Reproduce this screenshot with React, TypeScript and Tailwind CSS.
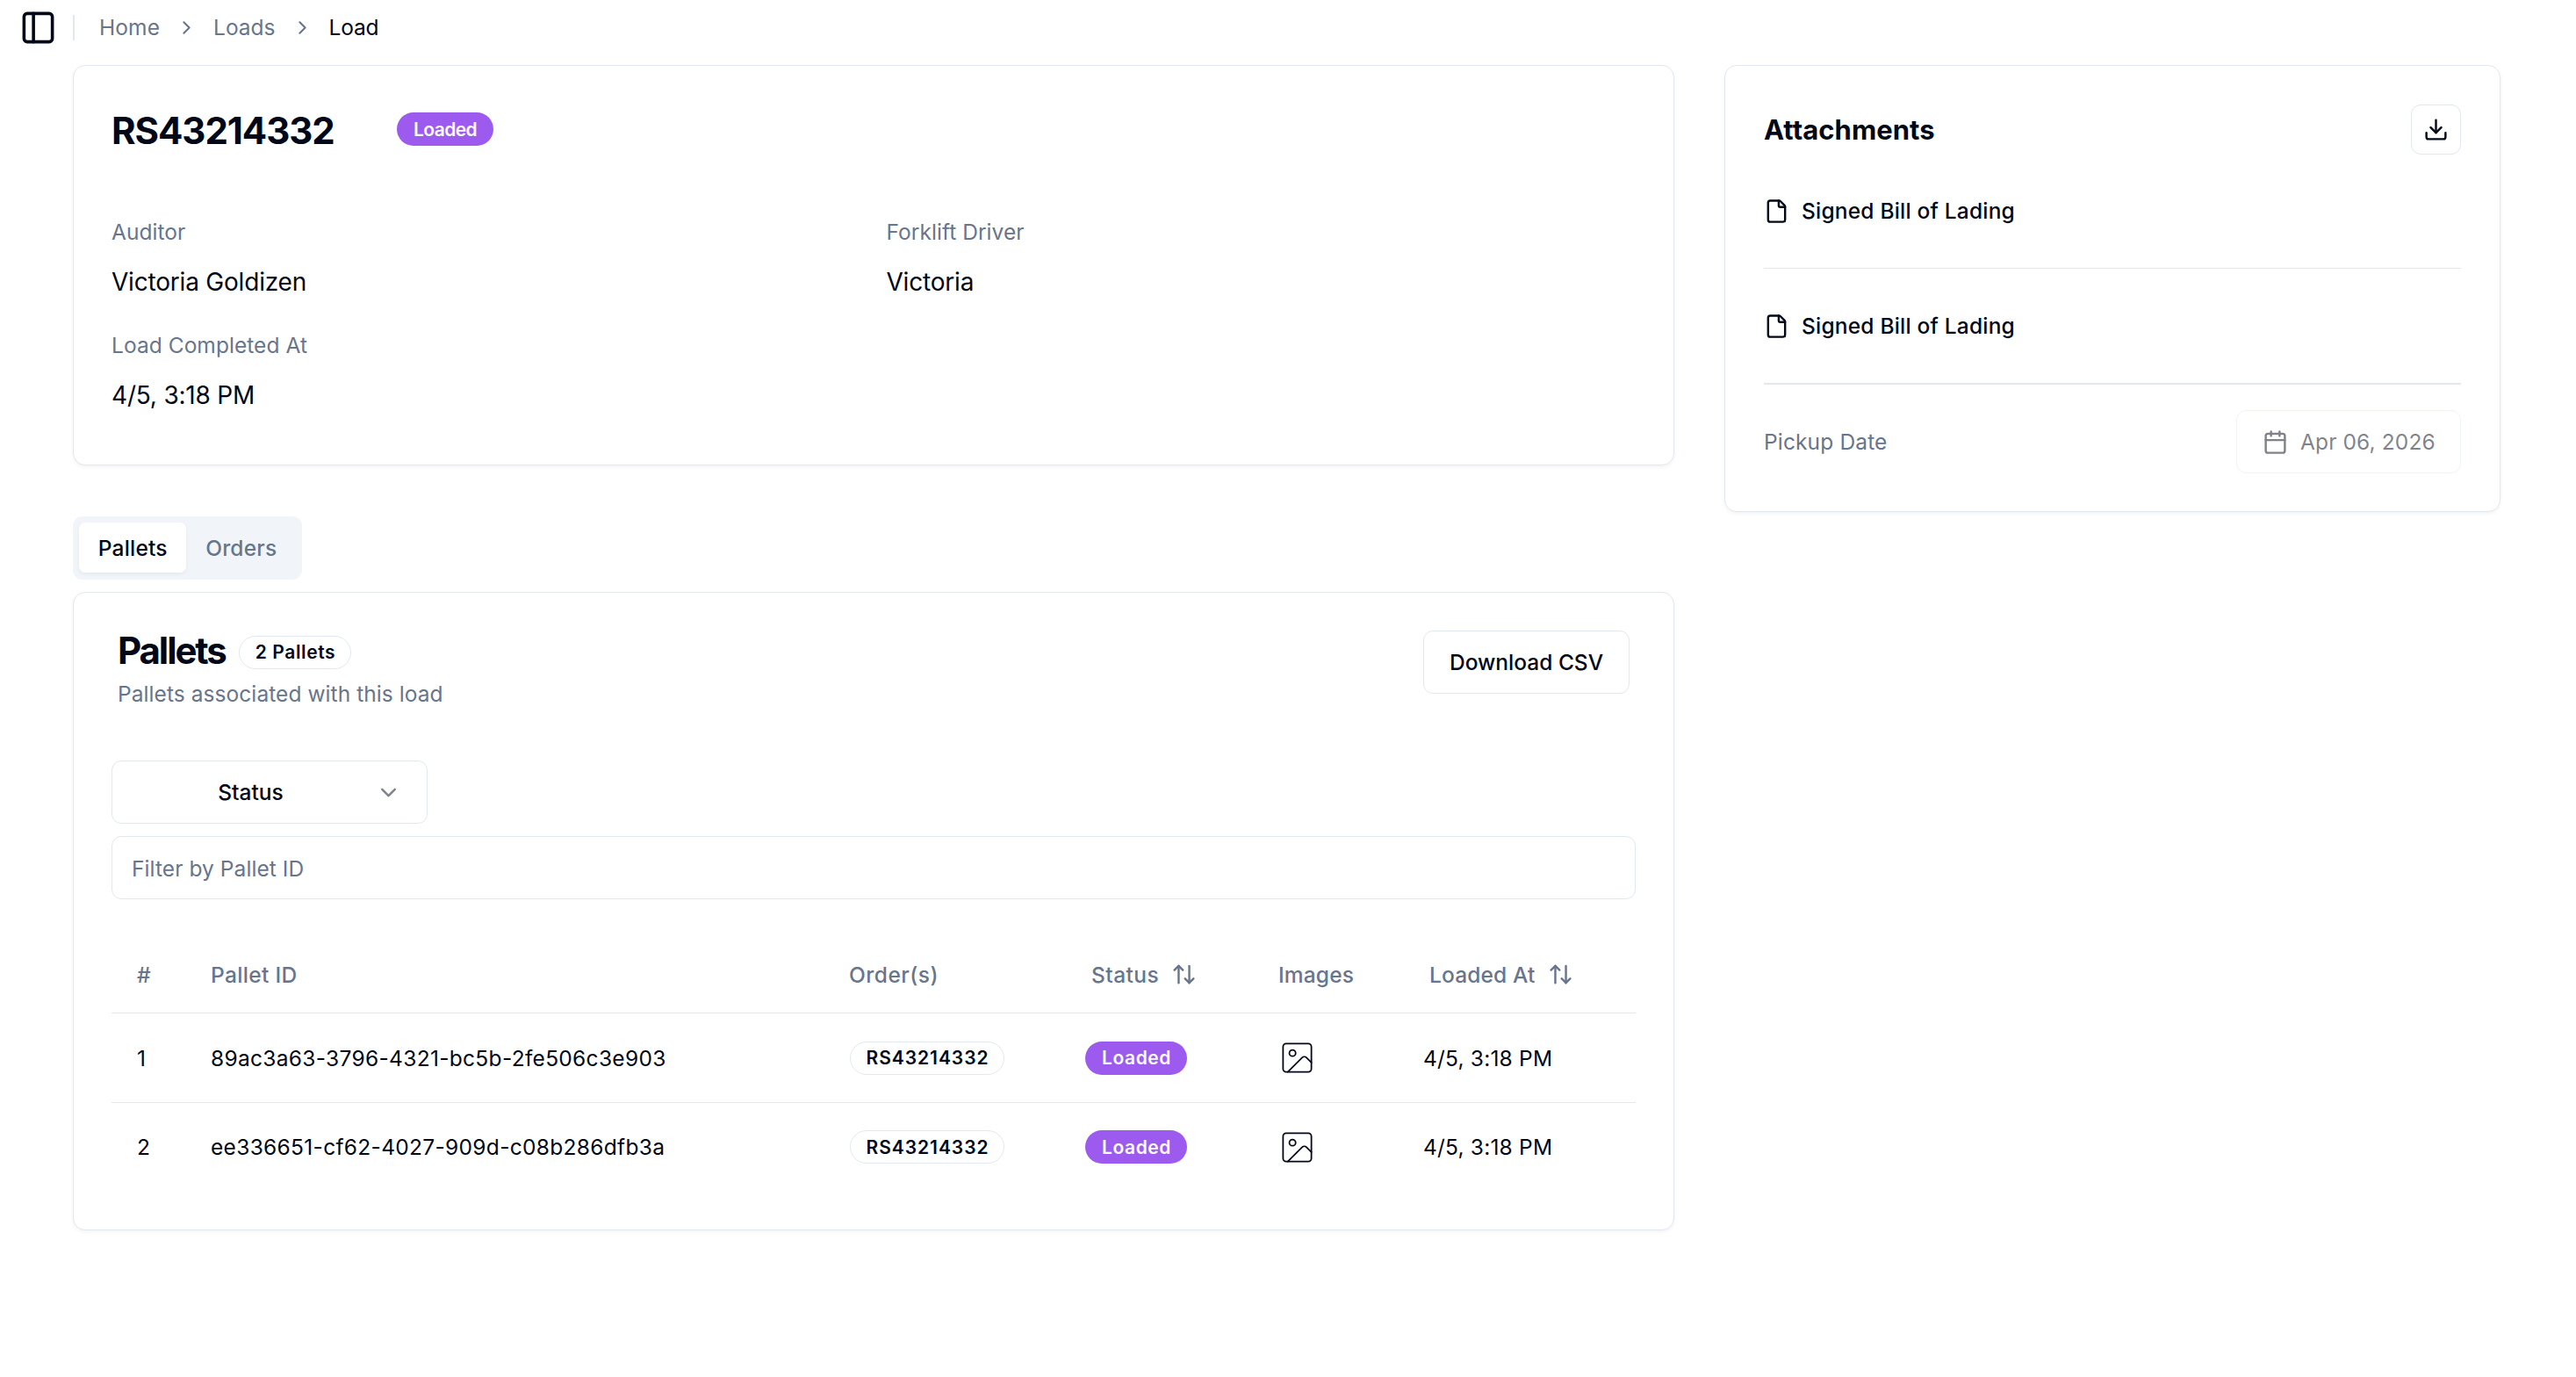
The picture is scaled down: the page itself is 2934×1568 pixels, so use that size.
import {
  ArrowUpDown,
  Calendar,
  ChevronDown,
  ChevronRight,
  Download,
  File,
  Image,
  PanelLeft,
} from "lucide-react";
import type { ReactNode } from "react";

interface Pallet {
  id: string;
  order: string;
  loadedAt: string;
}

const pallets: Pallet[] = [
  {
    id: "89ac3a63-3796-4321-bc5b-2fe506c3e903",
    order: "RS43214332",
    loadedAt: "4/5, 3:18 PM",
  },
  {
    id: "ee336651-cf62-4027-909d-c08b286dfb3a",
    order: "RS43214332",
    loadedAt: "4/5, 3:18 PM",
  },
];

interface CardProps {
  className: string;
  children: ReactNode;
}

function Card({ className, children }: CardProps) {
  return (
    <div
      className={`rounded-[14px] border border-slate-200 bg-white shadow-[0_2px_4px_rgba(0,0,0,0.05)] ${className}`}
    >
      {children}
    </div>
  );
}

function Header() {
  return (
    <header className="flex h-[62px] items-center pl-[22px]">
      <button>
        <PanelLeft className="size-[43px]" />
      </button>
      <div className="ml-[18px] h-[29px] w-[2px] bg-slate-200" />
      <nav className="ml-[28px] flex items-center gap-[18px] text-[#67758d]">
        <a className="tracking-[0.1px]">Home</a>
        <ChevronRight className="size-[25px]" />
        <a>Loads</a>
        <ChevronRight className="size-[25px]" />
        <span className="tracking-[-0.15px] text-[#020817]">Load</span>
      </nav>
    </header>
  );
}

interface FieldProps {
  label: string;
  value: string;
}

function Field({ label, value }: FieldProps) {
  return (
    <div className="flex flex-col gap-[17px]">
      <span className="leading-[37px] tracking-[0.05px] text-[#67758d]">
        {label}
      </span>
      <span className="text-[28px] leading-[43px] tracking-[-0.2px]">
        {value}
      </span>
    </div>
  );
}

function LoadDetails() {
  return (
    <Card className="h-[456px] p-[43px]">
      <div className="flex h-[62px] items-center">
        <h1 className="w-[325px] text-[42px] font-[650] tracking-[-1.05px]">
          RS43214332
        </h1>
        <span className="-mt-[4px] flex h-[38px] w-[110px] items-center justify-center rounded-full bg-[#9c5aee] pt-px text-[21px] font-semibold tracking-[-0.59px] text-slate-50">
          Loaded
        </span>
      </div>
      <div className="mt-[66px] grid grid-cols-2 gap-x-[29px] gap-y-[32px]">
        <Field label="Auditor" value="Victoria Goldizen" />
        <Field label="Forklift Driver" value="Victoria" />
        <Field label="Load Completed At" value="4/5, 3:18 PM" />
      </div>
    </Card>
  );
}

function Tabs() {
  return (
    <div className="mt-[58px] flex h-[72px] w-[261px] rounded-[11px] bg-slate-100 p-[7px] font-medium tracking-[0.2px]">
      <button className="h-[57px] w-[122px] rounded-[7px] bg-white pl-px shadow-[0_2px_4px_rgba(0,0,0,0.05)]">
        Pallets
      </button>
      <button className="h-[57px] w-[126px] pl-px text-[#67758d]">
        Orders
      </button>
    </div>
  );
}

function PalletsTable() {
  return (
    <table className="mt-[43px] w-full table-fixed text-left">
      <colgroup>
        <col className="w-[84px]" />
        <col className="w-[727px]" />
        <col className="w-[269px]" />
        <col className="w-[220px]" />
        <col className="w-[165px]" />
        <col />
      </colgroup>
      <thead>
        <tr className="h-[86px] border-b border-gray-200 text-[#67758d] [&>th]:pl-[29px] [&>th]:font-medium">
          <th>#</th>
          <th className="tracking-[0.34px]">Pallet ID</th>
          <th className="tracking-[0.5px]">Order(s)</th>
          <th className="tracking-[0.45px]">
            <button className="flex items-center gap-[14px] pl-[7px]">
              Status
              <ArrowUpDown className="size-[29px]" />
            </button>
          </th>
          <th className="tracking-[0.15px]">Images</th>
          <th className="tracking-[0.15px]">
            <button className="flex items-center gap-[14px] pl-[7px]">
              Loaded At
              <ArrowUpDown className="size-[29px]" />
            </button>
          </th>
        </tr>
      </thead>
      <tbody>
        {pallets.map((pallet, index) => (
          <tr
            key={pallet.id}
            className="h-[102px] border-b border-gray-200 last:h-[101px] last:border-0 [&>td]:pt-px [&>td]:pl-[29px]"
          >
            <td>{index + 1}</td>
            <td className="tracking-[0.31px]">{pallet.id}</td>
            <td>
              <span className="ml-px flex h-[38px] w-[176px] items-center justify-center rounded-full border border-slate-200 pt-px pl-px text-[21px] font-semibold tracking-[0.95px]">
                {pallet.order}
              </span>
            </td>
            <td>
              <span className="flex h-[38px] w-[116px] items-center justify-center rounded-full bg-[#9c5aee] pt-px pl-px text-[21px] font-semibold tracking-[0.6px] text-slate-50">
                Loaded
              </span>
            </td>
            <td>
              <Image className="size-[43px]" strokeWidth={1} />
            </td>
            <td className="tracking-[0.2px]">{pallet.loadedAt}</td>
          </tr>
        ))}
      </tbody>
    </table>
  );
}

function PalletsCard() {
  return (
    <Card className="mt-[14px] h-[727px] p-[43px]">
      <div className="flex h-[90px] items-start justify-between px-[7px]">
        <div>
          <div className="flex h-[46px] items-center">
            <h2 className="w-[138px] text-[42px] leading-[46px] font-[650] tracking-[-2.1px]">
              Pallets
            </h2>
            <span className="mt-[3px] flex h-[38px] w-[128px] items-center justify-center rounded-full border border-slate-200 pl-px text-[21px] font-semibold tracking-[0.6px]">
              2 Pallets
            </span>
          </div>
          <p className="mt-[8px] leading-[36px] tracking-[0.07px] text-[#67758d]">
            Pallets associated with this load
          </p>
        </div>
        <button className="h-[72px] w-[235px] rounded-[11px] border border-slate-200 font-medium">
          Download CSV
        </button>
      </div>
      <button className="mt-[58px] flex h-[72px] w-[360px] items-center rounded-[11px] border border-slate-200 px-[29px] font-medium">
        <span className="flex-1">Status</span>
        <ChevronDown className="ml-[14px] size-[29px] opacity-50" />
      </button>
      <input
        placeholder="Filter by Pallet ID"
        className="mt-[14px] block h-[72px] w-full rounded-[11px] border border-slate-200 px-[22px] pt-px tracking-[0.08px] placeholder:text-[#67758d]"
      />
      <PalletsTable />
    </Card>
  );
}

function Attachment() {
  return (
    <div className="flex h-[130px] items-center gap-[14px] font-medium tracking-[0.2px]">
      <File className="size-[29px]" />
      Signed Bill of Lading
    </div>
  );
}

function Attachments() {
  return (
    <Card className="h-[509px] w-[884px] p-[44px]">
      <div className="flex h-[57px] items-center justify-between">
        <h3 className="text-[31px] font-[650] tracking-[0.05px]">
          Attachments
        </h3>
        <button className="flex size-[57px] items-center justify-center rounded-[11px] border border-slate-200">
          <Download className="size-[29px]" />
        </button>
      </div>
      <div className="-mt-px border-b border-slate-200">
        <Attachment />
      </div>
      <div className="border-b-2 border-slate-200">
        <Attachment />
      </div>
      <div className="mt-[29px] flex items-center justify-between">
        <span className="tracking-[0.15px] text-[#67758d]">Pickup Date</span>
        <button className="flex h-[72px] w-[256px] items-center gap-[14px] rounded-[11px] border border-slate-200 pl-[29px] tracking-[0.12px] opacity-50">
          <Calendar className="size-[29px]" />
          Apr 06, 2026
        </button>
      </div>
    </Card>
  );
}

export default function App() {
  return (
    <div className="min-h-screen bg-white font-['Inter',sans-serif] text-[24.5px] leading-[36px] text-[#020817]">
      <Header />
      <main className="flex items-start gap-[57px] pt-[12px] pl-[83px]">
        <div className="w-[1824px]">
          <LoadDetails />
          <Tabs />
          <PalletsCard />
        </div>
        <Attachments />
      </main>
    </div>
  );
}
